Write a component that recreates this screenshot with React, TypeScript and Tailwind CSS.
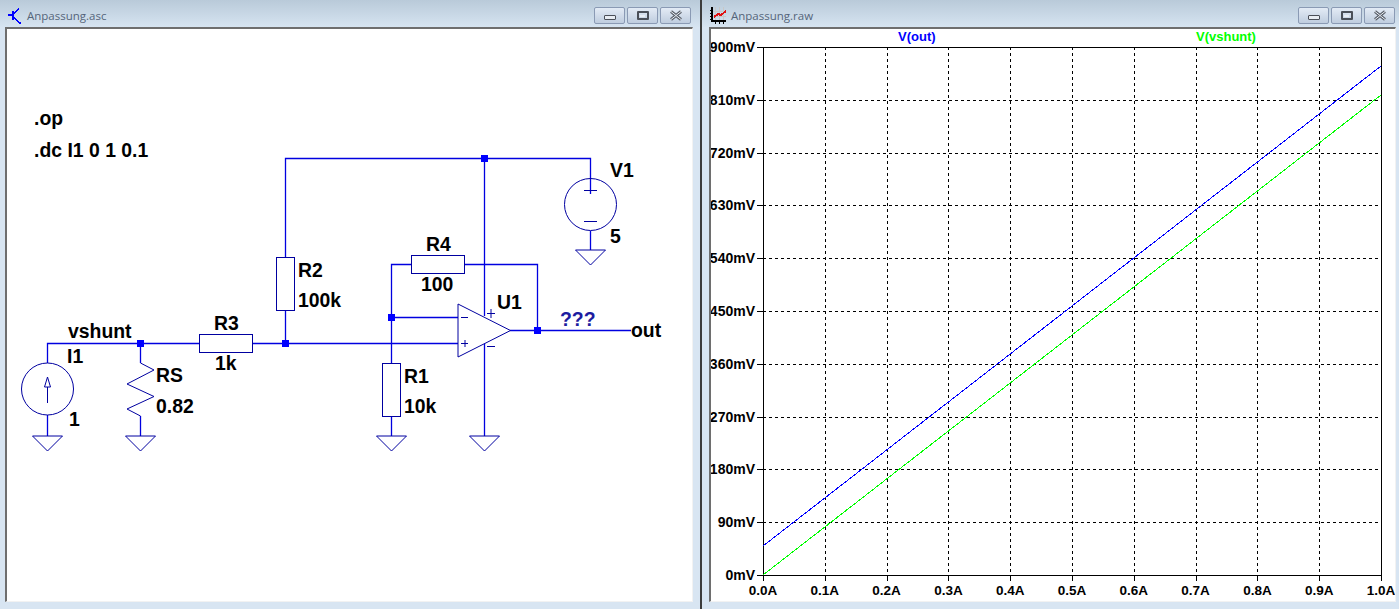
import type { ReactNode } from 'react';

const BLUE = '#0000e0';
const NAVY = '#0000a0';

// shared caption button on the window title bars
function CaptionButton({ children }: { children: ReactNode }) {
  return (
    <div className="flex h-[17px] w-[31px] items-center justify-center rounded-[2px] border border-[#8a9ab4] bg-gradient-to-b from-[#e3ebf5] to-[#bfcddf]">
      {children}
    </div>
  );
}

function CaptionButtons() {
  return (
    <div className="flex gap-[2px]">
      <CaptionButton>
        <div className="mt-[3px] h-[5px] w-[12px] rounded-[1px] border border-[#4a4f58] bg-[#e8edf3]" />
      </CaptionButton>
      <CaptionButton>
        <div className="flex h-[9px] w-[12px] items-center justify-center rounded-[1px] border-2 border-[#4a4f58]">
          <div className="h-[2px] w-[5px] bg-[#e8edf3]" />
        </div>
      </CaptionButton>
      <CaptionButton>
        <svg width="14" height="11" viewBox="0 0 14 11">
          <path d="M2 1.5 L12 9.5 M12 1.5 L2 9.5" stroke="#5b616b" strokeWidth="3" fill="none" />
          <path d="M2 1.5 L12 9.5 M12 1.5 L2 9.5" stroke="#e8edf3" strokeWidth="1" fill="none" />
        </svg>
      </CaptionButton>
    </div>
  );
}

function SchematicIcon() {
  return (
    <svg width="14" height="18" viewBox="0 0 14 18" className="shrink-0" shapeRendering="crispEdges">
      <path d="M0 8 H5 M5 4 V13" stroke="#0000ff" strokeWidth="2" fill="none" />
      <path d="M6 7 L11 1 M6 10 L11 16" stroke="#0000ff" strokeWidth="1.2" fill="none" />
      <path d="M9 15 H13 V17 H11 Z" fill="#0000ff" />
    </svg>
  );
}

function WaveIcon() {
  return (
    <svg width="16" height="17" viewBox="0 0 16 17" className="shrink-0" shapeRendering="crispEdges">
      <path d="M5 0 V13 M9 0 V13 M13 0 V13 M2 4 H16 M2 9 H16" stroke="#c8c8c8" fill="none" />
      <path d="M2 0 V14 H16" stroke="#000" strokeWidth="1.5" fill="none" />
      <path d="M0 3 H2 M0 6 H2 M0 9 H2 M0 12 H2 M5 14 V17 M9 14 V17 M13 14 V17" stroke="#000" fill="none" />
      <path d="M4 10 L8 7 L11 8 L16 4" stroke="#e01010" strokeWidth="2" fill="none" />
    </svg>
  );
}

function TitleBar({ icon, title, paddingRight }: { icon: ReactNode; title: string; paddingRight: string }) {
  return (
    <div className={`flex h-[27px] shrink-0 items-center justify-between bg-gradient-to-b from-[#b9cad9] to-[#d6e4f1] pt-[4px] ${paddingRight}`}>
      <div className="flex items-center gap-[5px] pl-[8px] text-[11.5px] text-[#55657a] [font-family:'Open_Sans',sans-serif]">
        {icon}
        <span>{title}</span>
      </div>
      <CaptionButtons />
    </div>
  );
}

function Ground({ x, y = 436 }: { x: number; y?: number }) {
  return <path d={`M${x - 15} ${y} H${x + 15} L${x} ${y + 15} Z`} fill="none" stroke={NAVY} />;
}

function Dot({ x, y }: { x: number; y: number }) {
  return <rect x={x - 3.5} y={y - 3.5} width="7" height="7" fill="#0000ff" />;
}

function Label({ x, y, children, fill = '#000' }: { x: number; y: number; children: ReactNode; fill?: string }) {
  return (
    <text x={x} y={y} fill={fill} fontSize="19.4" fontWeight="700" fontFamily="'Liberation Sans', sans-serif">
      {children}
    </text>
  );
}

function Schematic() {
  return (
    <svg width="686" height="572" viewBox="7 29 686 572" className="block">
      {/* wires */}
      <path
        d="M47.5 363 V343.5 H199.5 M252.5 343.5 H458 M140.5 343.5 V363 M140.5 416 V436 M47.5 415 V436
           M285.5 257 V158.5 H590.5 V194 M285.5 310 V343.5 M484.5 158.5 V316 M484.5 343 V436
           M391.5 363 V264.5 H411 M465 264.5 H537.5 V330.5 M391.5 317.5 H458 M391.5 416 V436
           M510 330.5 H631 M590.5 231 V250"
        fill="none"
        stroke={BLUE}
        strokeWidth="1.3"
      />
      {/* resistors */}
      <rect x="199.5" y="334.5" width="53" height="18" fill="none" stroke={NAVY} />
      <rect x="276.5" y="257.5" width="18" height="53" fill="none" stroke={NAVY} />
      <rect x="411.5" y="255.5" width="53" height="18" fill="none" stroke={NAVY} />
      <rect x="382.5" y="363.5" width="18" height="53" fill="none" stroke={NAVY} />
      <path d="M140.5 363 L154 370 L127 384 L154 396.5 L127 409 L140.5 416" fill="none" stroke={NAVY} />
      {/* op amp */}
      <path d="M458 304 V357 L510.5 330.5 Z" fill="#fff" stroke={NAVY} />
      <path d="M461 317.5 H468 M461 343.5 H468 M465 340 V347 M487 313.5 H495 M491 309 V318 M487 346.5 H495" stroke={NAVY} fill="none" />
      {/* V1 marks */}
      <path d="M584 190.5 H597 M584 221.5 H597" stroke={NAVY} fill="none" />
      {/* I1 arrow */}
      <path d="M47.5 403 V387 M47.5 377 L44.5 387 H50.5 Z" stroke={NAVY} fill="none" />
      <circle cx="47.5" cy="389" r="26" fill="none" stroke={NAVY} />
      <circle cx="590.5" cy="204.5" r="26" fill="none" stroke={NAVY} />
      <Dot x={140.5} y={343.5} />
      <Dot x={285.5} y={343.5} />
      <Dot x={484.5} y={158.5} />
      <Dot x={391.5} y={317.5} />
      <Dot x={537.5} y={330.5} />
      <Ground x={47.5} />
      <Ground x={140.5} />
      <Ground x={391.5} />
      <Ground x={484.5} />
      <Ground x={590.5} y={250} />

      <Label x={34} y={125}>.op</Label>
      <Label x={34} y={157}>.dc I1 0 1 0.1</Label>
      <Label x={68} y={338}>vshunt</Label>
      <Label x={67} y={363}>I1</Label>
      <Label x={69} y={426}>1</Label>
      <Label x={156} y={382}>RS</Label>
      <Label x={156} y={413}>0.82</Label>
      <Label x={214} y={330}>R3</Label>
      <Label x={215} y={370}>1k</Label>
      <Label x={298} y={277}>R2</Label>
      <Label x={298} y={307}>100k</Label>
      <Label x={426} y={251}>R4</Label>
      <Label x={421} y={291}>100</Label>
      <Label x={497} y={309}>U1</Label>
      <Label x={560} y={326} fill="#1c1ca0">???</Label>
      <Label x={631} y={337}>out</Label>
      <Label x={404} y={383}>R1</Label>
      <Label x={404} y={413}>10k</Label>
      <Label x={610} y={177}>V1</Label>
      <Label x={610} y={243}>5</Label>
    </svg>
  );
}

const yLabels = ['900mV', '810mV', '720mV', '630mV', '540mV', '450mV', '360mV', '270mV', '180mV', '90mV', '0mV'];
const xLabels = ['0.0A', '0.1A', '0.2A', '0.3A', '0.4A', '0.5A', '0.6A', '0.7A', '0.8A', '0.9A', '1.0A'];

function Plot() {
  const left = 763;
  const right = 1381;
  const top = 47;
  const bottom = 575;
  const stepX = (right - left) / 10;
  const stepY = (bottom - top) / 10;

  return (
    <svg width="684" height="572" viewBox="711 29 684 572" className="block" fontFamily="'Liberation Sans', sans-serif" fontWeight="700" fontSize="14">
      <g shapeRendering="crispEdges">
        {yLabels.map((_, i) => {
          const y = Math.round(top + i * stepY) + 0.5;
          return (
            <g key={i}>
              {i > 0 && i < 10 && <line x1={left} x2={right} y1={y} y2={y} stroke="#000" strokeDasharray="3 3" />}
              <line x1={757} x2={left} y1={y} y2={y} stroke="#000" />
            </g>
          );
        })}
        {xLabels.map((_, i) => {
          const x = Math.round(left + i * stepX) + 0.5;
          return (
            <g key={i}>
              {i > 0 && i < 10 && <line x1={x} x2={x} y1={top} y2={bottom} stroke="#000" strokeDasharray="3 3" />}
              <line x1={x} x2={x} y1={bottom} y2={581} stroke="#000" />
            </g>
          );
        })}
        <rect x={left + 0.5} y={top + 0.5} width={right - left} height={bottom - top} fill="none" stroke="#000" />
        <line x1={left} y1={546} x2={right} y2={66} stroke="#0000ff" />
        <line x1={left} y1={575} x2={right} y2={95} stroke="#00ff00" />
      </g>
      {yLabels.map((label, i) => (
        <text key={label} x={755} y={Math.round(top + i * stepY) + 5} textAnchor="end" fill="#000">
          {label}
        </text>
      ))}
      {xLabels.map((label, i) => (
        <text key={label} x={left + i * stepX} y={595} textAnchor="middle" fill="#000" fontSize="13.5">
          {label}
        </text>
      ))}
      <text x={898} y={41} fill="#0000ff" fontSize="13">V(out)</text>
      <text x={1196} y={41} fill="#00ff00" fontSize="13">V(vshunt)</text>
    </svg>
  );
}

export default function App() {
  return (
    <div className="flex h-[609px] w-[1399px] overflow-hidden bg-[#d8e5f2]">
      <div className="flex w-[700px] shrink-0 flex-col">
        <TitleBar icon={<SchematicIcon />} title="Anpassung.asc" paddingRight="pr-[9px]" />
        <div className="mr-[7px] ml-[5px] h-[575px] border-t-2 border-r border-b border-l-2 border-t-[#6e6e6e] border-r-[#f2f2f2] border-b-[#f2f2f2] border-l-[#6e6e6e] bg-white">
          <Schematic />
        </div>
      </div>

      <div className="w-[2px] shrink-0 bg-[#3c3c3c]" />

      <div className="flex min-w-0 flex-1 flex-col">
        <TitleBar icon={<WaveIcon />} title="Anpassung.raw" paddingRight="pr-[4px]" />
        <div className="mr-[3px] ml-[7px] h-[575px] border-t-2 border-r border-b border-l-2 border-t-[#6e6e6e] border-r-[#f2f2f2] border-b-[#f2f2f2] border-l-[#6e6e6e] bg-white">
          <Plot />
        </div>
      </div>
    </div>
  );
}
